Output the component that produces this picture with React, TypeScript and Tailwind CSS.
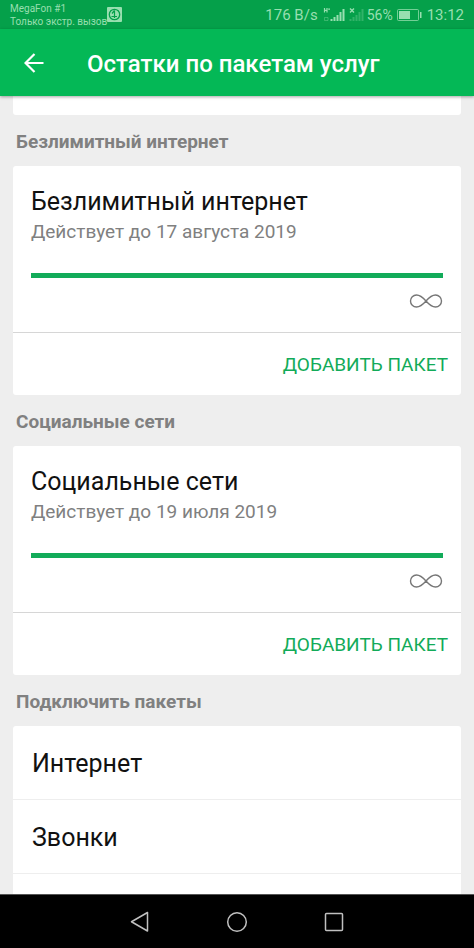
import React from "react";

type Pack = { title: string; until: string };

const packs: Pack[] = [
  { title: "Безлимитный интернет", until: "Действует до 17 августа 2019" },
  { title: "Социальные сети", until: "Действует до 19 июля 2019" },
];

function StatusBar() {
  return (
    <div className="flex h-[29px] shrink-0 items-center justify-between bg-[#05a04a] px-[10px] text-[#98dfb0]">
      <div className="flex items-center">
        <div className="text-[10px] leading-[13px]">
          <div>MegaFon #1</div>
          <div>Только экстр. вызов</div>
        </div>
        <svg width="15" height="15" viewBox="0 0 15 15" aria-hidden="true">
          <rect width="15" height="15" rx="1" fill="#98dfb0" />
          <circle cx="7.500" cy="7.500" r="5.200" fill="none" stroke="#05a04a" strokeWidth="1.300" />
          <path d="M7.500 3.500v7.500M4.500 9.500h5.500M7.500 3.500L5 6.500" fill="none" stroke="#05a04a" strokeWidth="1.200" />
        </svg>
      </div>
      <div className="flex items-center text-[15px] leading-[18px]">
        <span>176 B/s</span>
        <svg className="ml-[5px]" width="22" height="14" viewBox="0 0 22 14" aria-hidden="true">
          <g stroke="#98dfb0" fill="none">
            <path d="M1.500 0v4.500M4 0v4.500M1.500 2.300H4M5.200 1.200h1.800" strokeWidth="1.200" />
            <path d="M8.500 11v2M11.500 9v4M14.500 7v6M17.500 4v9M20.500 1v12" strokeWidth="2" />
            <path d="M1.500 9.500h3.500v3H1.500z" opacity=".35" />
          </g>
        </svg>
        <svg className="ml-[4px]" width="15" height="14" viewBox="0 0 15 14" aria-hidden="true">
          <path d="M1 .5l4 4M5 .5l-4 4" stroke="#98dfb0" strokeWidth="1.400" />
          <path d="M1.500 11v2M4.500 9v4M7.500 7v6M10.500 4v9M13.500 1v12" stroke="#98dfb0" strokeWidth="2" opacity=".3" />
        </svg>
        <span className="ml-[3px] text-[14px]">56%</span>
        <svg className="ml-[4px]" width="25" height="12" viewBox="0 0 25 12" aria-hidden="true">
          <rect x=".5" y=".5" width="21" height="11" rx="1" fill="none" stroke="#98dfb0" strokeOpacity=".75" />
          <rect x="2" y="2" width="11" height="8" fill="#98dfb0" />
          <rect x="23" y="3" width="1.500" height="6" fill="#98dfb0" />
        </svg>
        <span className="ml-[5px]">13:12</span>
      </div>
    </div>
  );
}

function SectionTitle({ children }: { children: React.ReactNode }) {
  return (
    <h2 className="flex h-[51px] items-center px-[3px] pt-[2px] text-[19px] leading-6 font-bold text-[#808080]">
      {children}
    </h2>
  );
}

function PackCard({ title, until }: Pack) {
  return (
    <section>
      <SectionTitle>{title}</SectionTitle>
      <div className="rounded-[3px] bg-white">
        <div className="border-b border-[#d6d6d6] px-[18px] pt-5 pb-6">
          <h3 className="text-[25px] leading-8 text-[#111]">{title}</h3>
          <p className="text-[19px] leading-7 text-[#808080]">{until}</p>
          <div className="mt-[27px] h-[5px] bg-[#12ab59]" />
          <div className="mt-[16px] flex justify-end">
            <svg width="34" height="14" viewBox="0 0 34 14" role="img" aria-label="Безлимит">
              <path
                d="M17 7C13.500 3 11 1 7.500 1a6 6 0 0 0 0 12C11 13 13.500 11 17 7s6-6 9.500-6a6 6 0 0 1 0 12C23 13 20.500 11 17 7z"
                fill="none"
                stroke="#777"
                strokeWidth="1.400"
              />
            </svg>
          </div>
        </div>
        <div className="flex h-[62px] items-center justify-end pt-[2px] pr-[13px]">
          <button type="button" className="text-[19px] leading-6 text-[#12ab59]">
            ДОБАВИТЬ ПАКЕТ
          </button>
        </div>
      </div>
    </section>
  );
}

export default function App() {
  return (
    <div className="flex h-screen flex-col overflow-hidden bg-[#eee] font-['Roboto','Noto_Sans',sans-serif]">
      <StatusBar />
      <header className="z-10 flex h-[67px] shrink-0 items-center bg-[#04b856] pl-6 text-white shadow-[0_1px_3px_rgba(0,0,0,0.35)]">
        <button type="button" aria-label="Назад" className="flex w-[63px]">
          <svg width="20" height="20" viewBox="0 0 20 20" aria-hidden="true">
            <path d="M19.500 10H1.500M10.500 1L1.500 10l9 9" fill="none" stroke="currentColor" strokeWidth="2.200" />
          </svg>
        </button>
        <h1 className="pt-[2px] text-[24px] leading-7 font-medium">Остатки по пакетам услуг</h1>
      </header>
      <main className="min-h-0 flex-1 overflow-hidden px-[13px]">
        <div className="h-[19px] rounded-b-[3px] bg-white" />
        {packs.map((pack) => (
          <PackCard key={pack.title} {...pack} />
        ))}
        <section>
          <SectionTitle>Подключить пакеты</SectionTitle>
          <ul className="rounded-t-[3px] bg-white text-[25px] leading-8 text-[#111]">
            <li className="flex h-[74px] items-center border-b border-[#eee] px-[19px] pt-[2px]">Интернет</li>
            <li className="flex h-[74px] items-center border-b border-[#eee] px-[19px] pt-[2px]">Звонки</li>
            <li className="h-[74px]" />
          </ul>
        </section>
      </main>
      <nav className="flex h-[54px] shrink-0 items-center justify-center gap-[76px] border-t border-[#555] bg-black text-[#c0c0c0]">
        <button type="button" aria-label="Назад">
          <svg width="20" height="22" viewBox="0 0 20 22" fill="none" stroke="currentColor" strokeWidth="1.500" strokeLinejoin="round" aria-hidden="true">
            <path d="M17.500 1.500v18.500L1.500 10.750z" />
          </svg>
        </button>
        <button type="button" aria-label="Домой">
          <svg width="22" height="22" viewBox="0 0 22 22" fill="none" stroke="currentColor" strokeWidth="1.500" aria-hidden="true">
            <circle cx="11" cy="11" r="9.300" />
          </svg>
        </button>
        <button type="button" aria-label="Недавние">
          <svg width="20" height="20" viewBox="0 0 20 20" fill="none" stroke="currentColor" strokeWidth="1.500" aria-hidden="true">
            <rect x="1.500" y="1.500" width="17" height="17" rx="1" />
          </svg>
        </button>
      </nav>
    </div>
  );
}
